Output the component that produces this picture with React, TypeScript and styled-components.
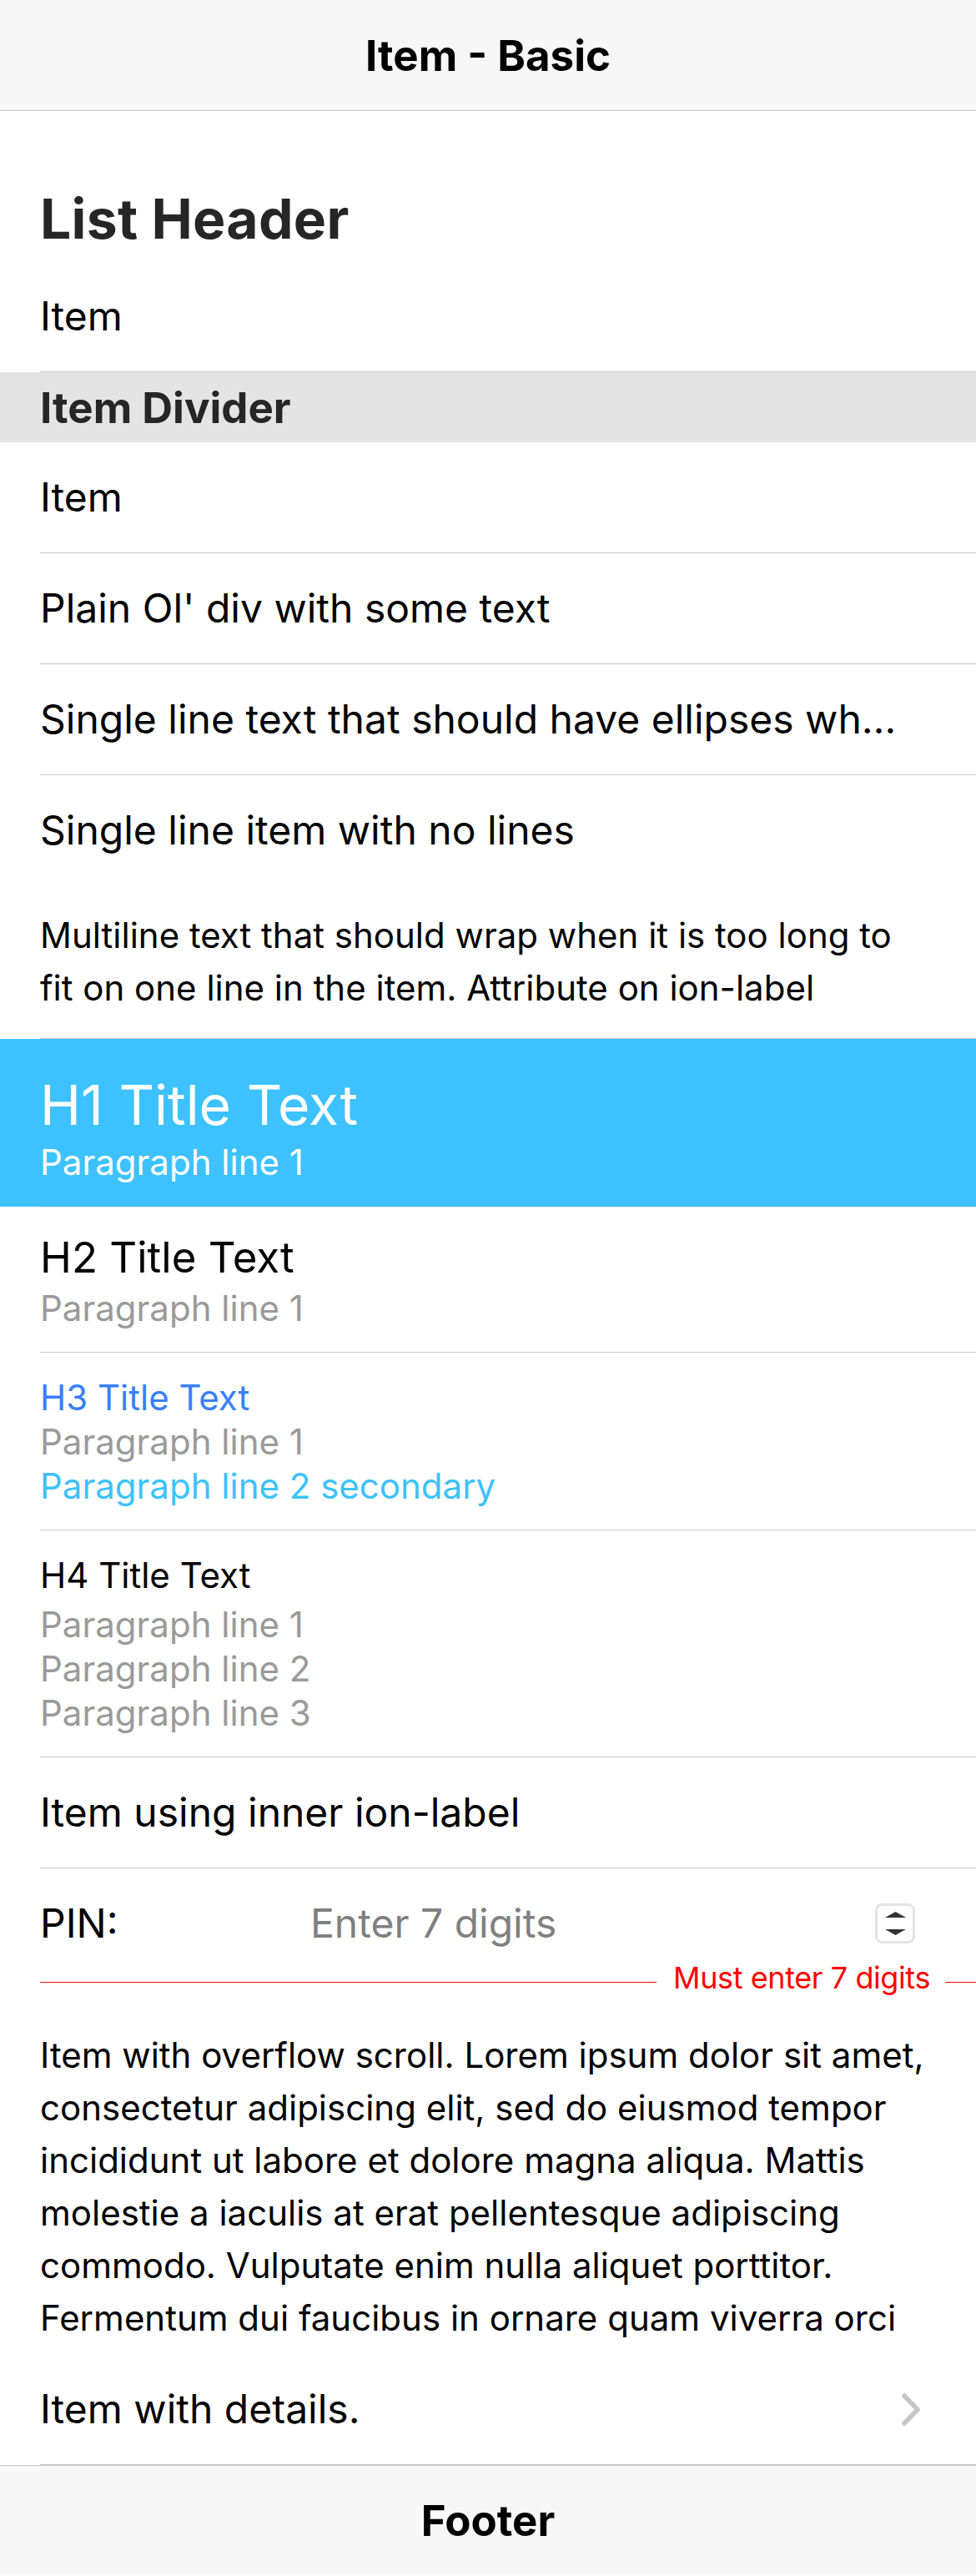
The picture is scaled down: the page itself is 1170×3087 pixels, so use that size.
import React from "react";
import styled, { createGlobalStyle } from "styled-components";

const GlobalStyle = createGlobalStyle`
  html, body {
    margin: 0;
    padding: 0;
    background: #ffffff;
  }
  body {
    font-family: Inter, "Liberation Sans", Arial, sans-serif;
    color: #000000;
    -webkit-font-smoothing: antialiased;
  }
  *, *::before, *::after {
    box-sizing: border-box;
  }
`;

const Page = styled.div`
  width: 1170px;
  display: flex;
  flex-direction: column;
`;

const Toolbar = styled.div<{ $edge: "top" | "bottom" }>`
  flex: 0 0 auto;
  height: ${({ $edge }) => ($edge === "top" ? "133px" : "132px")};
  display: flex;
  align-items: center;
  justify-content: center;
  background: #f7f7f7;
  border-${({ $edge }) => ($edge === "top" ? "bottom" : "top")}: 1px solid #c6c6c8;
`;

const ToolbarTitle = styled.div`
  font-size: 51px;
  font-weight: 700;
  color: #000;
`;

const List = styled.div`
  display: flex;
  flex-direction: column;
`;

const ListHeader = styled.div`
  height: 180px;
  padding: 0 48px 11px;
  display: flex;
  align-items: flex-end;
  font-size: 66px;
  line-height: 80px;
  font-weight: 700;
  letter-spacing: 0.3px;
  color: #262626;
`;

const Item = styled.div<{ $bg?: string }>`
  padding-left: 48px;
  background: ${({ $bg }) => $bg || "#ffffff"};
`;

const ItemInner = styled.div<{ $lines?: "inset" | "none"; $tint?: boolean }>`
  display: flex;
  align-items: center;
  min-height: ${({ $lines }) => ($lines === "none" ? "132px" : "133px")};
  padding-right: 48px;
  border-bottom: ${({ $lines, $tint }) =>
    $lines === "none"
      ? "none"
      : `1px solid ${$tint ? "rgba(0, 0, 0, 0.08)" : "#c8c7cc"}`};
`;

const Label = styled.div`
  flex: 1;
  min-width: 0;
  margin-right: 24px;
  font-size: 48px;
  line-height: 58px;
  white-space: nowrap;
  overflow: hidden;
  text-overflow: ellipsis;
`;

const WrapLabel = styled.div`
  flex: 1;
  margin-right: 24px;
  padding: 28px 0 29px;
  font-size: 42px;
  line-height: 63px;
`;

const Divider = styled.div`
  height: 84px;
  padding-left: 48px;
  display: flex;
  align-items: center;
  background: #e4e4e4;
  font-size: 51px;
  font-weight: 700;
  color: #262626;
`;

const Stack = styled.div`
  flex: 1;
  display: flex;
  flex-direction: column;
  margin-right: 24px;
  padding: 27px 0 26px;
`;

const H1 = styled.h1`
  margin: 10px 0 0;
  font-size: 66px;
  line-height: 84px;
  font-weight: 400;
  color: #ffffff;
`;

const H2 = styled.h2`
  margin: 0;
  font-size: 51px;
  line-height: 68px;
  font-weight: 400;
`;

const H3 = styled.h3<{ $color?: string; $gap?: number }>`
  margin: 0 0 ${({ $gap }) => $gap || 0}px;
  font-size: 42px;
  line-height: 53px;
  font-weight: 400;
  color: ${({ $color }) => $color || "#000000"};
`;

const Para = styled.p<{ $color?: string }>`
  margin: 0;
  font-size: 42px;
  line-height: 53px;
  color: ${({ $color }) => $color || "#9a9a9a"};
`;

const PinItem = styled.div`
  padding: 0 0 10px 48px;
  display: flex;
  flex-direction: column;
`;

const PinRow = styled.div`
  display: flex;
  align-items: center;
  padding: 37px 48px 14px 0;
`;

const PinLabel = styled.label`
  flex: 0 0 300px;
  margin-right: 24px;
  font-size: 48px;
  line-height: 58px;
`;

const PinInput = styled.input`
  flex: 1;
  min-width: 0;
  border: none;
  outline: none;
  padding: 0;
  background: transparent;
  font-family: inherit;
  font-size: 48px;
  line-height: 58px;
  height: 58px;
  color: #000;

  &::placeholder {
    color: #808080;
  }
`;

const Stepper = styled.svg`
  flex: 0 0 auto;
  margin-right: 25px;
`;

const ErrorRow = styled.div`
  display: flex;
  align-items: center;
  height: 45px;
`;

const ErrorLine = styled.div<{ $grow?: boolean }>`
  flex: ${({ $grow }) => ($grow ? "1" : "0 0 37px")};
  height: 1px;
  margin-top: 9px;
  background: #ff0000;
`;

const ErrorText = styled.span`
  margin: 0 18px 0 20px;
  font-size: 36px;
  line-height: 45px;
  letter-spacing: -0.4px;
  color: #ff0000;
`;

const ScrollItem = styled.div`
  height: 418px;
  padding: 28px 36px 0 48px;
  overflow-y: auto;
  scrollbar-width: none;
  font-size: 42px;
  line-height: 63px;

  &::-webkit-scrollbar {
    display: none;
  }
`;

const Chevron = styled.svg`
  flex: 0 0 auto;
  margin-right: 19px;
`;

export default function App() {
  return (
    <Page>
      <GlobalStyle />
      <Toolbar $edge="top">
        <ToolbarTitle>Item - Basic</ToolbarTitle>
      </Toolbar>

      <List>
        <ListHeader>List Header</ListHeader>

        <Item>
          <ItemInner>
            <Label>Item</Label>
          </ItemInner>
        </Item>

        <Divider>Item Divider</Divider>

        <Item>
          <ItemInner>
            <Label>Item</Label>
          </ItemInner>
        </Item>
        <Item>
          <ItemInner>
            <Label>Plain Ol' div with some text</Label>
          </ItemInner>
        </Item>
        <Item>
          <ItemInner>
            <Label>
              Single line text that should have ellipses when it doesn't fit in
              the item
            </Label>
          </ItemInner>
        </Item>
        <Item>
          <ItemInner $lines="none">
            <Label>Single line item with no lines</Label>
          </ItemInner>
        </Item>
        <Item>
          <ItemInner>
            <WrapLabel>
              Multiline text that should wrap when it is too long to fit on one
              line in the item. Attribute on ion-label
            </WrapLabel>
          </ItemInner>
        </Item>

        <Item $bg="#3dc2ff">
          <ItemInner $tint>
            <Stack>
              <H1>H1 Title Text</H1>
              <Para $color="#ffffff">Paragraph line 1</Para>
            </Stack>
          </ItemInner>
        </Item>
        <Item>
          <ItemInner>
            <Stack>
              <H2>H2 Title Text</H2>
              <Para>Paragraph line 1</Para>
            </Stack>
          </ItemInner>
        </Item>
        <Item>
          <ItemInner>
            <Stack>
              <H3 $color="#3880ff">H3 Title Text</H3>
              <Para>Paragraph line 1</Para>
              <Para $color="#3dc2ff">Paragraph line 2 secondary</Para>
            </Stack>
          </ItemInner>
        </Item>
        <Item>
          <ItemInner>
            <Stack>
              <H3 as="h4" $gap={6}>
                H4 Title Text
              </H3>
              <Para>Paragraph line 1</Para>
              <Para>Paragraph line 2</Para>
              <Para>Paragraph line 3</Para>
            </Stack>
          </ItemInner>
        </Item>

        <Item>
          <ItemInner>
            <Label>Item using inner ion-label</Label>
          </ItemInner>
        </Item>

        <PinItem>
          <PinRow>
            <PinLabel htmlFor="pin">PIN:</PinLabel>
            <PinInput id="pin" placeholder="Enter 7 digits" />
            <Stepper width="48" height="48" viewBox="0 0 48 48">
              <rect
                x="1.5"
                y="1.5"
                width="45"
                height="45"
                rx="7"
                fill="#ffffff"
                stroke="#e4e4e4"
                strokeWidth="3"
              />
              <path d="M12 17 L24.5 10 L37 17 Z" fill="#333333" />
              <path d="M12 31 L37 31 L24.5 38 Z" fill="#333333" />
            </Stepper>
          </PinRow>
          <ErrorRow>
            <ErrorLine $grow />
            <ErrorText>Must enter 7 digits</ErrorText>
            <ErrorLine />
          </ErrorRow>
        </PinItem>

        <ScrollItem>
          Item with overflow scroll. Lorem ipsum dolor sit amet, consectetur
          adipiscing elit, sed do eiusmod tempor incididunt ut labore et dolore
          magna aliqua. Mattis molestie a iaculis at erat pellentesque
          adipiscing commodo. Vulputate enim nulla aliquet porttitor. Fermentum
          dui faucibus in ornare quam viverra orci sagittis eu. Volutpat odio
          facilisis mauris sit amet massa vitae tortor condimentum. Sed vulputate
          mi sit amet mauris commodo quis imperdiet massa.
        </ScrollItem>

        <Item>
          <ItemInner>
            <Label>Item with details.</Label>
            <Chevron width="22" height="39" viewBox="0 0 22 39">
              <polyline
                points="3,3 19,19.5 3,36"
                fill="none"
                stroke="#c5c5c7"
                strokeWidth="5.5"
                strokeLinecap="round"
                strokeLinejoin="round"
              />
            </Chevron>
          </ItemInner>
        </Item>
      </List>

      <Toolbar $edge="bottom">
        <ToolbarTitle>Footer</ToolbarTitle>
      </Toolbar>
    </Page>
  );
}
